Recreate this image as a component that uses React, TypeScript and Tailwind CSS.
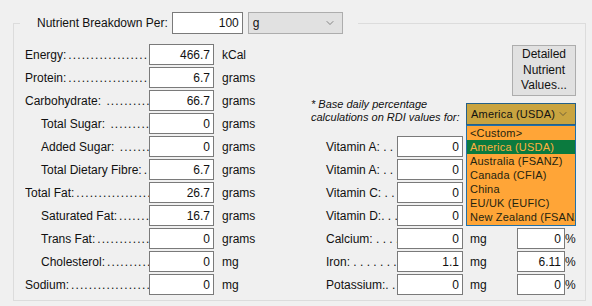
import { ChevronDown } from 'lucide-react';

type Row = { label: string; value: string; unit: string; indent?: boolean };

const leftRows: Row[] = [
  { label: 'Energy:', value: '466.7', unit: 'kCal' },
  { label: 'Protein:', value: '6.7', unit: 'grams' },
  { label: 'Carbohydrate: ', value: '66.7', unit: 'grams' },
  { label: 'Total Sugar: ', value: '0', unit: 'grams', indent: true },
  { label: 'Added Sugar: ', value: '0', unit: 'grams', indent: true },
  { label: 'Total Dietary Fibre:', value: '6.7', unit: 'grams', indent: true },
  { label: 'Total Fat:', value: '26.7', unit: 'grams' },
  { label: 'Saturated Fat:', value: '16.7', unit: 'grams', indent: true },
  { label: 'Trans Fat:', value: '0', unit: 'grams', indent: true },
  { label: 'Cholesterol:', value: '0', unit: 'mg', indent: true },
  { label: 'Sodium:', value: '0', unit: 'mg' },
];

const rightRows = [
  { label: 'Vitamin A: . . . .', value: '0', pct: '0' },
  { label: 'Vitamin A: . . . .', value: '0', pct: '0' },
  { label: 'Vitamin C: . . . .', value: '0', pct: '0' },
  { label: 'Vitamin D:. . . .', value: '0', pct: '0' },
  { label: 'Calcium: . . . . . .', value: '0', pct: '0' },
  { label: 'Iron: . . . . . . . . .', value: '1.1', pct: '6.11' },
  { label: 'Potassium:. . . .', value: '0', pct: '0' },
];

const regions = [
  '<Custom>',
  'America (USDA)',
  'Australia (FSANZ)',
  'Canada (CFIA)',
  'China',
  'EU/UK (EUFIC)',
  'New Zealand (FSANZ)',
];

function Box({ value, className = '' }: { value: string; className?: string }) {
  return (
    <input
      readOnly
      value={value}
      className={`h-[21px] bg-white border border-[#7a7a7a] text-right pr-[3px] outline-none ${className}`}
    />
  );
}

export default function App() {
  return (
    <div className="w-[592px] h-[306px] bg-[#f0f0f0] text-[12px] text-[#111] font-['Liberation_Sans',Arial,sans-serif] pt-[12px] pl-[13px] overflow-hidden">
      <fieldset className="w-[573px] h-[289px] border border-[#dcdcdc]">
        <legend className="ml-[6px] pl-[17px] pr-[15px] flex items-center h-[22px]">
          <span className="mr-[4px]">Nutrient Breakdown Per:</span>
          <Box value="100" className="w-[71px] !h-[22px]" />
          <div className="ml-[5px] w-[95px] h-[22px] bg-[#e1e1e1] border border-[#adadad] flex items-center justify-between pl-[4px] pr-[6px]">
            <span>g</span>
            <ChevronDown size={12} strokeWidth={1.2} className="text-[#444]" />
          </div>
        </legend>

        <div className="flex pt-[10px] pl-[11px]">
          {/* left column */}
          <div className="w-[286px] flex flex-col gap-[2px]">
            {leftRows.map((r, i) => (
              <div key={i} className="flex items-center h-[21px]">
                <div
                  className={`w-[124px] overflow-hidden whitespace-nowrap ${r.indent ? 'pl-[16px]' : ''}`}
                >
                  {r.label}
                  <span className="tracking-[1.1px] pl-[2px]">{'.'.repeat(30)}</span>
                </div>
                <Box value={r.value} className="w-[65px]" />
                <span className="ml-[8px]">{r.unit}</span>
              </div>
            ))}
          </div>

          {/* right column */}
          <div className="flex-1 flex flex-col">
            <div className="h-[92px] flex flex-col">
              <div className="self-end mr-[9px] mt-[1px] w-[64px] h-[51px] bg-[#e1e1e1] border border-[#adadad] flex items-center justify-center text-center leading-[15.5px]">
                Detailed
                <br />
                Nutrient
                <br />
                Values...
              </div>
              <div className="flex items-start mt-[7px]">
                <div className="w-[155px] -mt-[5px] text-[11px] italic leading-[13px]">
                  * Base daily percentage
                  <br />
                  calculations on RDI values for:
                </div>
                <div className="relative w-[110px] z-10 text-[11px] whitespace-nowrap">
                  <div className="h-[22px] bg-[#c9a440] border border-[#24608a] flex items-center justify-between pl-[4px] pr-[6px] tracking-[0.2px]">
                    <span>America (USDA)</span>
                    <ChevronDown size={12} strokeWidth={1.2} className="text-[#333]" />
                  </div>
                  <div className="absolute top-full left-0 w-full h-[101px] bg-[#ffa537] border border-[#2270a8] overflow-hidden tracking-[0.2px]">
                    {regions.map((r) => (
                      <div
                        key={r}
                        className={`h-[14px] leading-[14px] pl-[3px] ${
                          r === 'America (USDA)' ? 'bg-[#0b7a3e] text-[#ffb040]' : 'text-[#1e2410]'
                        }`}
                      >
                        {r}
                      </div>
                    ))}
                  </div>
                </div>
              </div>
            </div>

            <div className="flex flex-col gap-[2px]">
              {rightRows.map((r, i) => (
                <div key={i} className="flex items-center h-[21px]">
                  <div className="w-[86px] pl-[15px] pr-[2px] overflow-hidden whitespace-nowrap">{r.label}</div>
                  <Box value={r.value} className="w-[66px]" />
                  <span className="w-[54px] pl-[7px]">mg</span>
                  <Box value={r.pct} className="w-[48px]" />
                  <span className="ml-[0px]">%</span>
                </div>
              ))}
            </div>
          </div>
        </div>
      </fieldset>
    </div>
  );
}
